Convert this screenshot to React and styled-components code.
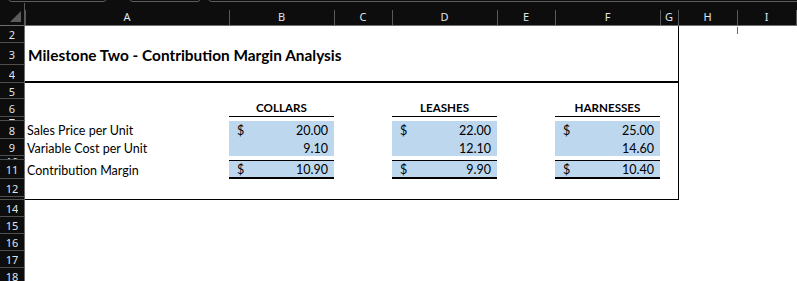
import React from "react";
import styled, { createGlobalStyle } from "styled-components";

const GlobalStyle = createGlobalStyle`
  html, body {
    margin: 0;
    padding: 0;
    background: #ffffff;
    overflow: hidden;
  }
`;

const COLS = ["A", "B", "C", "D", "E", "F", "G", "H", "I"];

const ROWS = [
  { n: 2, h: 17 },
  { n: 3, h: 22 },
  { n: 4, h: 18 },
  { n: 5, h: 16 },
  { n: 6, h: 18 },
  { n: 7, h: 4 },
  { n: 8, h: 18 },
  { n: 9, h: 17 },
  { n: 10, h: 4 },
  { n: 11, h: 19 },
  { n: 12, h: 18 },
  { n: 13, h: 3 },
  { n: 14, h: 17 },
  { n: 15, h: 17 },
  { n: 16, h: 17 },
  { n: 17, h: 17 },
  { n: 18, h: 17 },
];

// grid line of a sheet row / column
const r = (n) => ROWS.findIndex((row) => row.n === n) + 2;
const c = (letter) => COLS.indexOf(letter) + 2;

const products = [
  { col: "B", name: "COLLARS", price: "20.00", cost: "9.10", margin: "10.90" },
  { col: "D", name: "LEASHES", price: "22.00", cost: "12.10", margin: "9.90" },
  { col: "F", name: "HARNESSES", price: "25.00", cost: "14.60", margin: "10.40" },
];

const App = () => {
  return (
    <Window>
      <GlobalStyle />
      <TopBar>
        <BarBox $left={7} $width={101} />
        <BarBox $left={20} $width={74} />
        <BarBox $left={5} $grow />
      </TopBar>

      <Sheet>
        <Corner>
          <svg width="12" height="12" viewBox="0 0 12 12">
            <polygon points="11,0 11,11 0,11" fill="#5b5b5b" />
          </svg>
        </Corner>
        {COLS.map((letter) => (
          <ColHead key={letter} style={{ gridColumn: c(letter) }}>
            {letter}
          </ColHead>
        ))}
        <ColHead style={{ gridColumn: 11 }} />

        {ROWS.map((row) => (
          <RowHead key={row.n} style={{ gridRow: r(row.n) }}>
            <RowNum $h={row.h}>{row.n}</RowNum>
          </RowHead>
        ))}

        <Frame />
        <Title>Milestone Two - Contribution Margin Analysis</Title>
        <Rule />

        <Label style={{ gridRow: r(8) }}>Sales Price per Unit</Label>
        <Label style={{ gridRow: r(9) }}>Variable Cost per Unit</Label>
        <Label style={{ gridRow: r(11) }}>Contribution Margin</Label>

        {products.map((p) => (
          <React.Fragment key={p.name}>
            <ProductHead style={{ gridColumn: c(p.col) }}>{p.name}</ProductHead>
            <Money style={{ gridColumn: c(p.col), gridRow: r(8) }}>
              <span>$</span>
              <span>{p.price}</span>
            </Money>
            <Money style={{ gridColumn: c(p.col), gridRow: r(9) }}>
              <span />
              <span>{p.cost}</span>
            </Money>
            <Money $total style={{ gridColumn: c(p.col), gridRow: r(11) }}>
              <span>$</span>
              <span>{p.margin}</span>
            </Money>
          </React.Fragment>
        ))}

        <Caret />
      </Sheet>
    </Window>
  );
};

const Window = styled.div`
  width: 797px;
  height: 281px;
  overflow: hidden;
  background: #ffffff;
`;

const TopBar = styled.div`
  display: flex;
  align-items: flex-end;
  height: 3px;
  overflow: hidden;
  background: #0d0d0d;
`;

const BarBox = styled.div`
  flex: ${(p) => (p.$grow ? "1" : "none")};
  width: ${(p) => (p.$width ? `${p.$width}px` : "auto")};
  margin-left: ${(p) => p.$left}px;
  margin-right: ${(p) => (p.$grow ? "-10px" : "0")};
  margin-bottom: 1px;
  height: 20px;
  border: 1px solid #5e5e5e;
  border-radius: 5px;
  box-sizing: border-box;
`;

const Sheet = styled.div`
  display: grid;
  grid-template-columns: 25px 204px 105px 58px 105px 58px 105px 18px 59px 59px 1fr;
  grid-template-rows: 23px ${ROWS.map((row) => `${row.h}px`).join(" ")};
  font-family: Lato, "Open Sans", sans-serif;
  color: #000000;
`;

const Corner = styled.div`
  grid-column: 1;
  grid-row: 1;
  display: flex;
  align-items: flex-end;
  justify-content: flex-end;
  padding: 0 2px 2px 0;
  background: #0d0d0d;
  border-bottom: 1px solid #6e6e6e;
  border-right: 1px solid #5a5a5a;
`;

const ColHead = styled.div`
  grid-row: 1;
  display: flex;
  align-items: flex-end;
  justify-content: center;
  padding-bottom: 1px;
  background: #0d0d0d;
  border-bottom: 1px solid #6e6e6e;
  color: #dfe6ee;
  font-family: "Noto Sans", "Open Sans", sans-serif;
  font-size: 11px;
  line-height: 14px;
  position: relative;

  &::before {
    content: "";
    position: absolute;
    left: 0;
    top: 7px;
    bottom: 0;
    width: 1px;
    background: #5a5a5a;
  }
`;

const RowHead = styled.div`
  grid-column: 1;
  display: flex;
  align-items: flex-start;
  justify-content: center;
  overflow: hidden;
  background: #0d0d0d;
  border-bottom: 1px solid #4f4f4f;
  border-right: 1px solid #6e6e6e;
  color: #dfe6ee;
  font-family: "Noto Sans", "Open Sans", sans-serif;
  font-size: 11px;
`;

const RowNum = styled.span`
  display: block;
  height: ${(p) => p.$h - 1}px;
  line-height: ${(p) => Math.max(p.$h, 10) + 1}px;
  overflow: hidden;
`;

const Frame = styled.div`
  grid-column: ${c("A")} / ${c("H")};
  grid-row: ${r(2)} / ${r(14)};
  margin-right: -1px;
  border-right: 1px solid #000000;
  border-bottom: 1px solid #000000;
`;

const Title = styled.div`
  grid-column: ${c("A")} / ${c("H")};
  grid-row: ${r(3)};
  display: flex;
  align-items: center;
  padding: 1px 0 0 3px;
  font-size: 15.4px;
  font-weight: 700;
  white-space: nowrap;
`;

const Rule = styled.div`
  grid-column: ${c("A")} / ${c("H")};
  grid-row: ${r(4)};
  margin-right: -1px;
  border-bottom: 2px solid #000000;
`;

const Label = styled.div`
  grid-column: ${c("A")};
  display: flex;
  align-items: center;
  padding: 1px 0 0 2px;
  font-size: 12.5px;
  white-space: nowrap;
`;

const ProductHead = styled.div`
  grid-row: ${r(6)};
  display: flex;
  align-items: center;
  justify-content: center;
  border-bottom: 1px solid #000000;
  font-size: 11.6px;
  font-weight: 700;
`;

const Money = styled.div`
  display: flex;
  align-items: center;
  justify-content: space-between;
  padding: 1px 6px 0 8px;
  background: #bdd7ee;
  border-top: ${(p) => (p.$total ? "1px solid #000000" : "none")};
  border-bottom: ${(p) => (p.$total ? "2px solid #000000" : "none")};
  font-size: 12.5px;
`;

const Caret = styled.div`
  grid-column: ${c("I")};
  grid-row: ${r(2)};
  justify-self: start;
  align-self: start;
  width: 1px;
  height: 7px;
  margin-top: 1px;
  background: #3b6fb6;
`;

export default App;
